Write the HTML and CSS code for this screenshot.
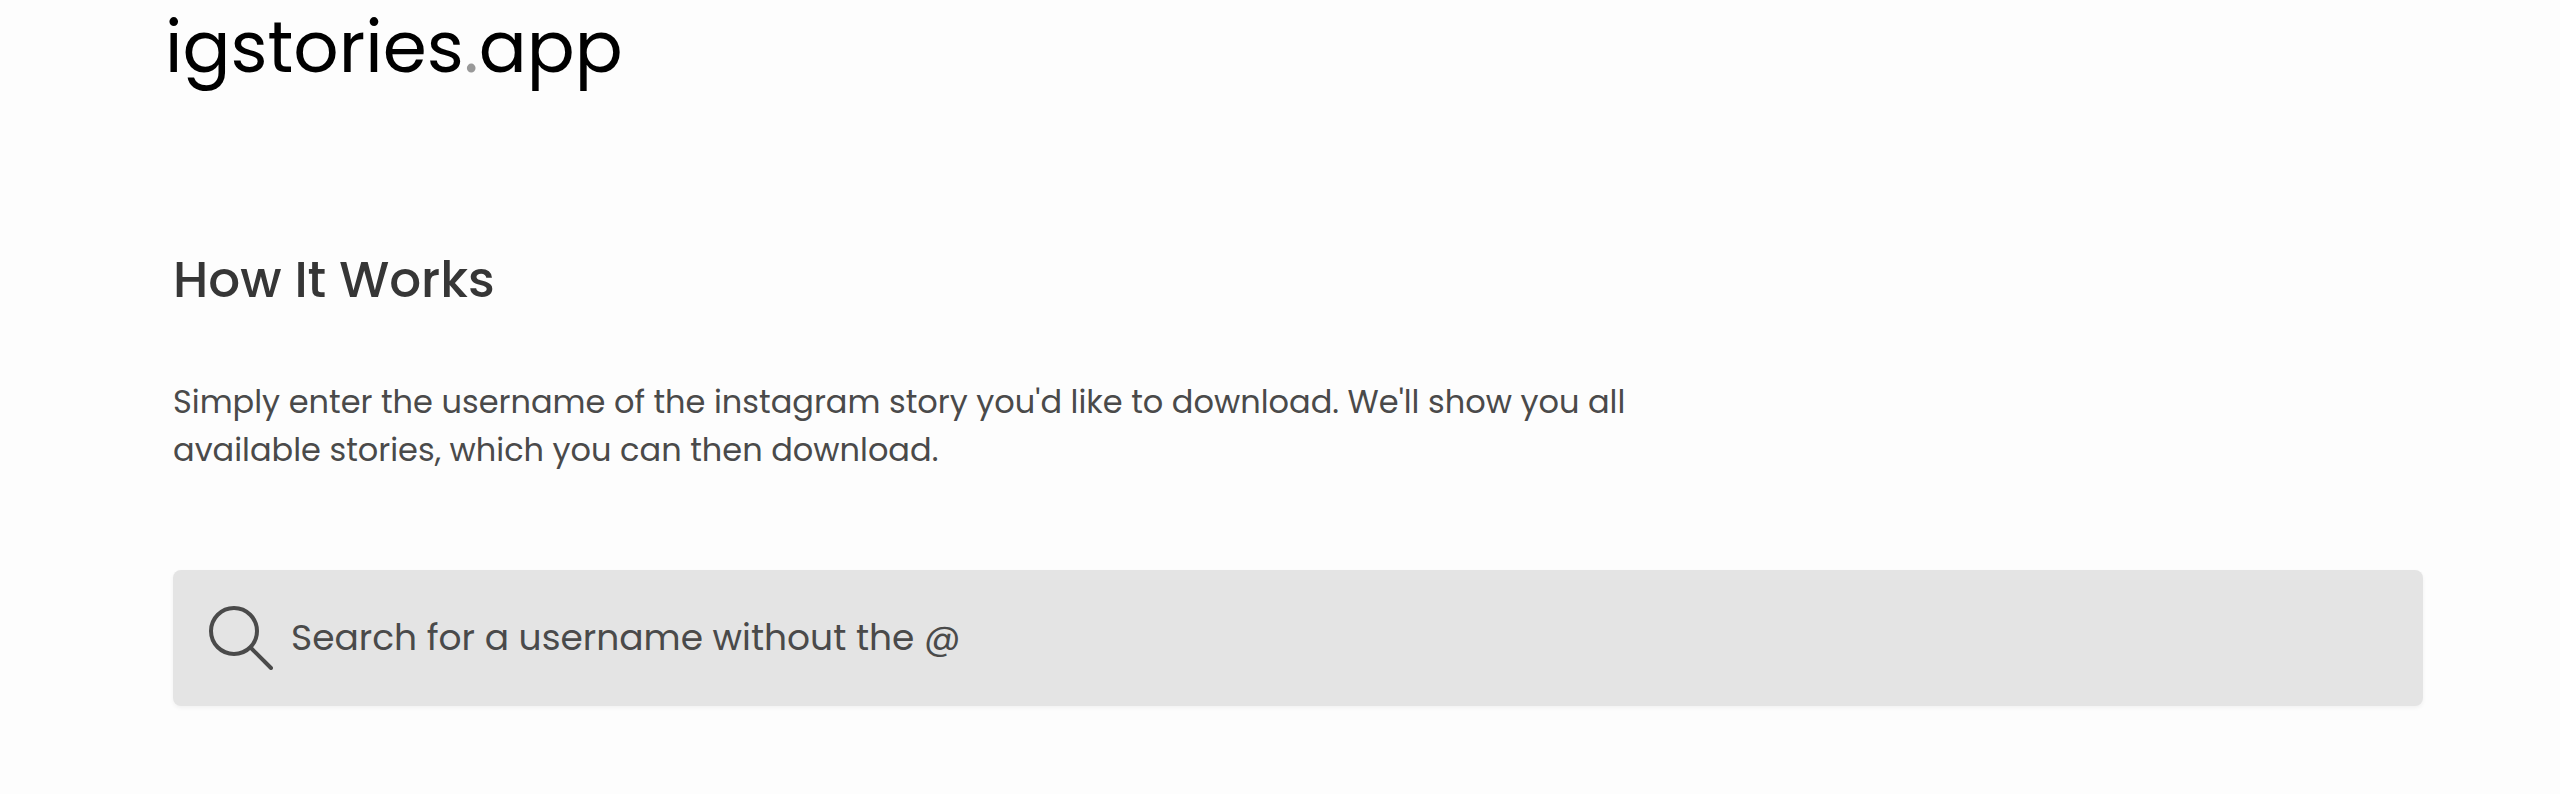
FILE: index.html
```
<!DOCTYPE html>
<html lang="en">
<head>
    <meta charset="UTF-8">
    <meta name="viewport" content="width=device-width, initial-scale=1">
    <title>igstories.app</title>
    <link rel="stylesheet" href="styles.css">
</head>
<body>
    <header class="header">
        <a class="logo" href="#">igstories<span class="dot">.</span>app</a>
    </header>

    <main class="content">
        <h1 class="title">How It Works</h1>
        <p class="intro">Simply enter the username of the instagram story you'd like to download. We'll show you all available stories, which you can then download.</p>

        <form class="search">
            <label class="search-label" for="username" aria-label="Username">
                <svg class="search-icon" viewBox="0 0 64 64" fill="none" stroke="currentColor" stroke-width="4" stroke-linecap="round">
                    <circle cx="25" cy="25" r="23"/>
                    <path d="M42 42l20 20"/>
                </svg>
            </label>
            <input class="search-input" type="text" id="username" placeholder="Search for a username without the @">
        </form>
    </main>
</body>
</html>
```

FILE: styles.css
```
* {
    box-sizing: border-box;
}
body {
    font-family: Poppins, Inter, sans-serif;
    margin: 0;
    background-color: #fdfdfd;
    color: #4a4a4a;
}
.header {
    padding: 0 137px 0 165px;
}
.logo {
    display: block;
    width: fit-content;
    font-size: 71px;
    line-height: 94px;
    color: #000;
    text-decoration: none;
}
.dot {
    color: #999;
}
.content {
    padding: 154px 137px 88px 173px;
}
.title {
    margin: 0 0 66px;
    font-size: 50px;
    font-weight: 500;
    line-height: 64px;
    color: #363636;
}
.intro {
    max-width: 1480px;
    margin: 0 0 96px;
    font-size: 32px;
    line-height: 48px;
}
.search {
    display: flex;
    align-items: center;
    gap: 18px;
    height: 136px;
    padding: 0 36px;
    background-color: #e4e4e4;
    border-radius: 8px;
    box-shadow: 0 2px 4px rgba(0,0,0,0.05);
}
.search-label {
    display: flex;
}
.search-icon {
    width: 64px;
    height: 64px;
}
.search-input {
    flex: 1;
    min-width: 0;
    padding: 0;
    border: none;
    outline: none;
    background: none;
    font-family: inherit;
    font-size: 36px;
    line-height: 48px;
    color: #4a4a4a;
}
.search-input::placeholder {
    color: #4a4a4a;
    opacity: 1;
}
```
